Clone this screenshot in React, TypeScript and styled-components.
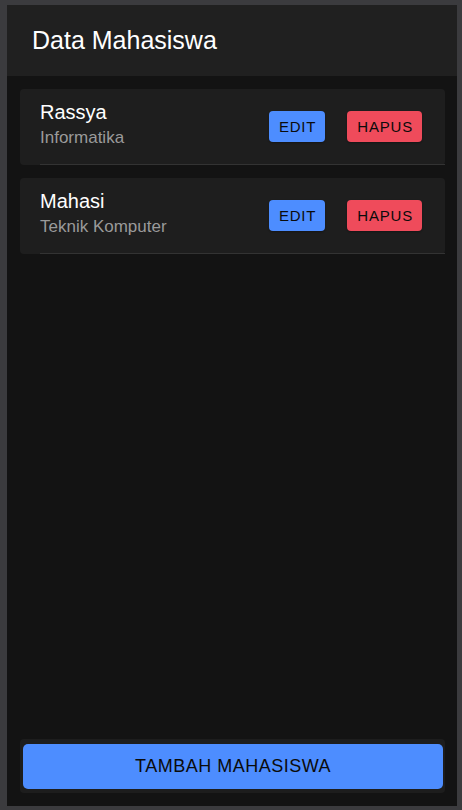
import React from 'react';
import styled, { createGlobalStyle } from 'styled-components';

interface Mahasiswa {
  id: number;
  nama: string;
  jurusan: string;
}

const data: Mahasiswa[] = [
  { id: 1, nama: 'Rassya', jurusan: 'Informatika' },
  { id: 2, nama: 'Mahasi', jurusan: 'Teknik Komputer' },
];

const GlobalStyle = createGlobalStyle`
  html, body {
    margin: 0;
    padding: 0;
    height: 100%;
    background: #3b3b3e;
    font-family: "Liberation Sans", Arial, sans-serif;
  }
  * {
    box-sizing: border-box;
  }
`;

const App: React.FC = () => {
  return (
    <>
      <GlobalStyle />
      <Frame>
        <Screen>
          <Header>
            <Title>Data Mahasiswa</Title>
          </Header>
          <Content>
            <List>
              {data.map((m) => (
                <Card key={m.id}>
                  <Item>
                    <Info>
                      <Name>{m.nama}</Name>
                      <Major>{m.jurusan}</Major>
                    </Info>
                    <Actions>
                      <ActionButton variant="primary">EDIT</ActionButton>
                      <ActionButton variant="danger">HAPUS</ActionButton>
                    </Actions>
                  </Item>
                </Card>
              ))}
            </List>
            <Footer>
              <AddButton>TAMBAH MAHASISWA</AddButton>
            </Footer>
          </Content>
        </Screen>
      </Frame>
    </>
  );
};

const Frame = styled.div`
  height: 100vh;
  padding: 5px 5px 4px 7px;
`;

const Screen = styled.div`
  display: flex;
  flex-direction: column;
  height: 100%;
  background: #131313;
`;

const Header = styled.header`
  display: flex;
  align-items: center;
  height: 71px;
  padding: 0 25px;
  background: #202020;
`;

const Title = styled.h1`
  margin: 0;
  color: #ffffff;
  font-size: 25px;
  font-weight: 400;
`;

const Content = styled.main`
  display: flex;
  flex: 1;
  flex-direction: column;
  justify-content: space-between;
  padding: 13px 12px 13px 13px;
`;

const List = styled.div`
  display: flex;
  flex-direction: column;
  gap: 13px;
`;

const Card = styled.div`
  padding-left: 20px;
  border-radius: 4px;
  background: #1e1e1e;
`;

const Item = styled.div`
  display: flex;
  align-items: center;
  min-height: 76px;
  padding-right: 23px;
  border-bottom: 1px solid #333333;
`;

const Info = styled.div`
  display: flex;
  flex: 1;
  flex-direction: column;
  gap: 4px;
  padding: 12px 0 16px;
`;

const Name = styled.div`
  color: #ffffff;
  font-size: 20px;
`;

const Major = styled.div`
  color: #9a9a9a;
  font-size: 17px;
`;

const Actions = styled.div`
  display: flex;
  gap: 22px;
`;

const ActionButton = styled.button<{ variant: 'primary' | 'danger' }>`
  height: 31px;
  padding: 0 9px 0 10px;
  border: none;
  border-radius: 4px;
  background: ${(props) => (props.variant === 'primary' ? '#4d8dff' : '#ef4b5b')};
  color: #0b0b0b;
  font-family: inherit;
  font-size: 15px;
  letter-spacing: 0.8px;
  box-shadow: 0 1px 2px rgba(0, 0, 0, 0.3);
`;

const Footer = styled.footer`
  padding: 5px 2px 4px 3px;
  border-radius: 4px;
  background: #1d1d1d;
`;

const AddButton = styled.button`
  width: 100%;
  height: 45px;
  border: none;
  border-radius: 5px;
  background: #4d8dff;
  color: #0b0b0b;
  font-family: inherit;
  font-size: 18px;
  letter-spacing: 0.5px;
`;

export default App;
